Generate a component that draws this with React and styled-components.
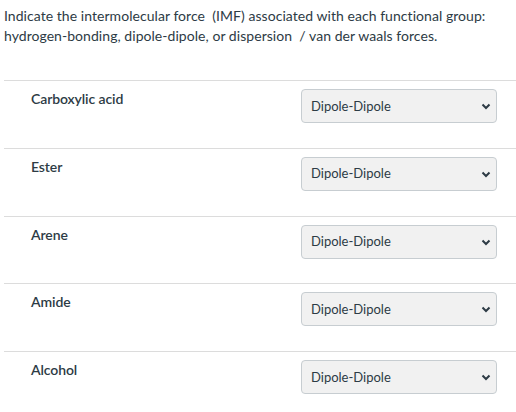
import React from "react";
import styled, { createGlobalStyle } from "styled-components";

const Global = createGlobalStyle`
  html, body { margin: 0; padding: 0; background: #fff; }
  body { font-family: Lato, "Noto Sans", sans-serif; color: #2d3b45; }
`;

const Page = styled.div`
  padding: 6px 0 0 4px;
  width: 512px;
`;

const Prompt = styled.p`
  margin: 0 0 34px;
  font-size: 14px;
  line-height: 20px;
  letter-spacing: 0.05px;
  color: #2d3b45;
  white-space: pre-wrap;
`;

const List = styled.div`
  display: flex;
  flex-direction: column;
`;

const Row = styled.div`
  display: grid;
  grid-template-columns: 1fr 196px;
  align-items: start;
  height: 67.75px;
  box-sizing: border-box;
  border-top: 1px solid #dcdcdc;
  padding: 8px 19px 0 27px;
`;

const Label = styled.div`
  font-size: 14px;
  font-weight: 600;
  line-height: 18px;
  padding-top: 1px;
  letter-spacing: -0.1px;
  color: #2d3b45;
`;

const SelectBox = styled.div`
  position: relative;
  height: 34px;
  box-sizing: border-box;
  border: 1px solid #c7cdd1;
  border-radius: 4px;
  background: #f1f1f1;
  display: flex;
  align-items: center;
  padding: 0 10px 1px 9px;
  font-size: 13px;
  color: #2d3b45;
`;

const Chevron = styled.svg`
  position: absolute;
  right: 5px;
  top: 50%;
  margin-top: -3px;
`;

const items = ["Carboxylic acid", "Ester", "Arene", "Amide", "Alcohol"];

export default function App() {
  return (
    <Page>
      <Global />
      <Prompt>
        {"Indicate the intermolecular force  (IMF) associated with each functional group:\nhydrogen-bonding, dipole-dipole, or dispersion  / van der waals forces."}
      </Prompt>
      <List>
        {items.map((it) => (
          <Row key={it}>
            <Label>{it}</Label>
            <SelectBox>
              Dipole-Dipole
              <Chevron width="10" height="7" viewBox="0 0 10 7">
                <path d="M1.5 1.5 L5 5 L8.5 1.5" fill="none" stroke="#2d3b45" strokeWidth="2" />
              </Chevron>
            </SelectBox>
          </Row>
        ))}
      </List>
    </Page>
  );
}
